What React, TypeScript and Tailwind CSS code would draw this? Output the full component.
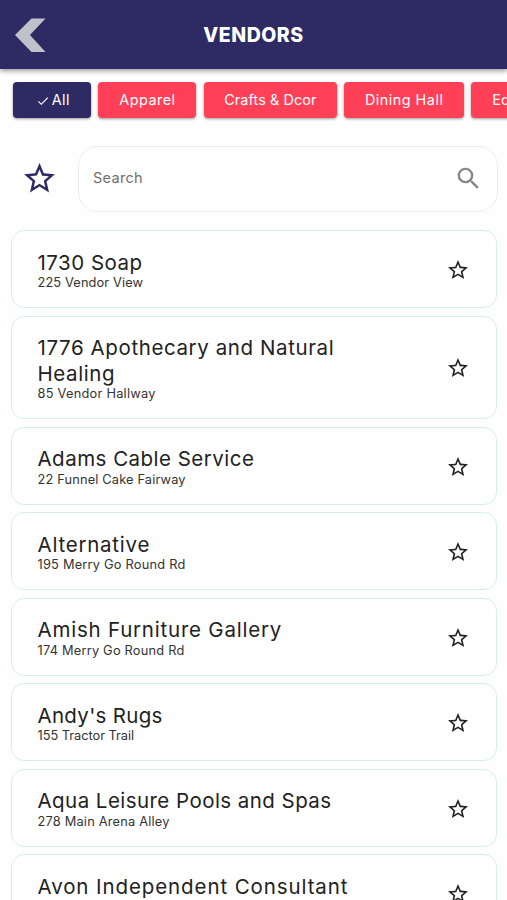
import { MdCheck, MdSearch, MdStarBorder } from "react-icons/md";

type Vendor = {
  name: string;
  location: string;
  nameSpacing: string;
  locationSpacing: string;
};

const categories = [
  { label: "Apparel", size: "w-[98px]", spacing: "tracking-[0.5px]" },
  { label: "Crafts & Dcor", size: "w-[133px]", spacing: "tracking-[0.1px]" },
  { label: "Dining Hall", size: "w-[119.5px]", spacing: "tracking-[0.5px]" },
  { label: "Education", size: "w-[112px]", spacing: "tracking-[0.3px]" },
];

const vendors: Vendor[] = [
  { name: "1730 Soap", location: "225 Vendor View", nameSpacing: "tracking-[0.5px]", locationSpacing: "tracking-[0.13px]" },
  { name: "1776 Apothecary and Natural Healing", location: "85 Vendor Hallway", nameSpacing: "tracking-[0.6px]", locationSpacing: "tracking-[0.25px]" },
  { name: "Adams Cable Service", location: "22 Funnel Cake Fairway", nameSpacing: "tracking-[0.48px]", locationSpacing: "tracking-[0.16px]" },
  { name: "Alternative", location: "195 Merry Go Round Rd", nameSpacing: "tracking-[0.76px]", locationSpacing: "tracking-[0.22px]" },
  { name: "Amish Furniture Gallery", location: "174 Merry Go Round Rd", nameSpacing: "tracking-[0.78px]", locationSpacing: "tracking-[0.22px]" },
  { name: "Andy's Rugs", location: "155 Tractor Trail", nameSpacing: "tracking-[0.3px]", locationSpacing: "tracking-[-0.03px]" },
  { name: "Aqua Leisure Pools and Spas", location: "278 Main Arena Alley", nameSpacing: "tracking-[0.45px]", locationSpacing: "tracking-[0.2px]" },
  { name: "Avon Independent Consultant", location: "Vendor Hallway", nameSpacing: "tracking-[0.9px]", locationSpacing: "tracking-[0.2px]" },
];

function Header() {
  return (
    <header className="relative flex h-[69px] shrink-0 items-center justify-center bg-[#2d2a64] shadow-[0_2px_5px_rgba(0,0,0,0.4)]">
      <button className="absolute top-[18px] left-[15px]" aria-label="Back">
        <svg width="31" height="34" viewBox="0 0 31 34" fill="#bfc2cb">
          <path d="M16.5 0.5H30.5L15 17L30.5 34H16.5L0 17Z" />
        </svg>
      </button>
      <h1 className="text-[19.5px] leading-6 font-extrabold tracking-[0.5px] text-white">
        VENDORS
      </h1>
    </header>
  );
}

function VendorCard({ vendor }: { vendor: Vendor }) {
  return (
    <li className="flex shrink-0 items-center rounded-[13px] border border-[#d5f0ea] bg-white pt-[18.5px] pr-[26px] pb-4 pl-[25.5px]">
      <div className="w-[325px]">
        <h2 className={`text-[20.5px] leading-[25.5px] text-[#222222] ${vendor.nameSpacing}`}>
          {vendor.name}
        </h2>
        <p className={`text-[12.8px] leading-4 text-[#333333] ${vendor.locationSpacing}`}>
          {vendor.location}
        </p>
      </div>
      <MdStarBorder className="-mt-px ml-auto size-6 text-[#222222]" />
    </li>
  );
}

export default function App() {
  return (
    <div className="flex h-[900px] w-full flex-col overflow-hidden bg-[#fefefe] font-['Inter',sans-serif]">
      <Header />
      <nav className="mt-[13px] flex shrink-0 gap-[7.5px] overflow-hidden pb-2 pl-[12.9px] text-[14.4px] text-white">
        <button className="flex h-9 w-[78px] shrink-0 items-center justify-center gap-0.5 rounded bg-[#2d2a64] pl-0.5 shadow-[0_1px_3px_rgba(0,0,0,0.4)]">
          <MdCheck className="mt-0.5 size-[14px]" />
          <span className="tracking-[0.5px]">All</span>
        </button>
        {categories.map((category) => (
          <button
            key={category.label}
            className={`h-9 shrink-0 rounded bg-[#ff4057] shadow-[0_1px_3px_rgba(0,0,0,0.4)] ${category.size} ${category.spacing}`}
          >
            {category.label}
          </button>
        ))}
      </nav>
      <div className="mt-[19.5px] flex shrink-0 items-center pr-[9px] pl-[21px]">
        <MdStarBorder className="size-[37px] text-[#2d2a64]" />
        <div className="ml-5 flex h-[66.5px] flex-1 items-center justify-between rounded-[20px] border border-[#ececec] bg-white px-[14px] pb-[2px]">
          <input
            className="w-48 text-[14.5px] tracking-[0.3px] outline-none placeholder:text-[#707070]"
            placeholder="Search"
          />
          <MdSearch className="mt-0.5 size-[29px] text-[#888888]" />
        </div>
      </div>
      <ul className="mt-[18.3px] flex flex-col gap-[7.5px] pr-[10px] pl-[11px]">
        {vendors.map((vendor) => (
          <VendorCard key={vendor.name} vendor={vendor} />
        ))}
      </ul>
    </div>
  );
}
